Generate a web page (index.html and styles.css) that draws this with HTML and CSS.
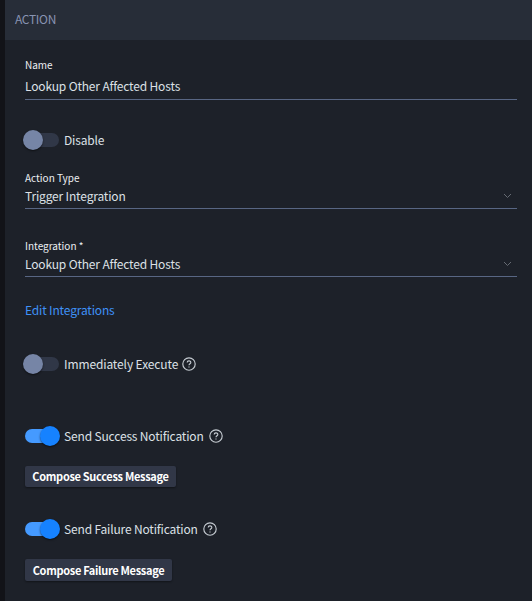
FILE: index.html
```html
<!DOCTYPE html>
<html lang="en">
<head>
<meta charset="utf-8">
<title>Action</title>
<link rel="stylesheet" href="styles.css">
</head>
<body>
<main class="panel">
  <header class="panel-header">ACTION</header>
  <form class="panel-body">
    <div class="field field-name">
      <label class="field-label">Name</label>
      <div class="field-value"><span>Lookup Other Affected Hosts</span></div>
    </div>
    <div class="toggle-row row-disable">
      <span class="switch"><span class="knob"></span></span>
      <span class="toggle-label">Disable</span>
    </div>
    <div class="field">
      <label class="field-label">Action Type</label>
      <div class="field-value"><span>Trigger Integration</span>
        <svg class="chevron" viewBox="0 0 9 6"><path d="M1 1l3.5 3.5L8 1"/></svg>
      </div>
    </div>
    <div class="field field-integration">
      <label class="field-label">Integration *</label>
      <div class="field-value"><span>Lookup Other Affected Hosts</span>
        <svg class="chevron" viewBox="0 0 9 6"><path d="M1 1l3.5 3.5L8 1"/></svg>
      </div>
    </div>
    <a class="link">Edit Integrations</a>
    <div class="toggle-row row-execute">
      <span class="switch"><span class="knob"></span></span>
      <span class="toggle-label">Immediately Execute</span>
      <svg class="help" viewBox="0 0 14 14"><circle cx="7" cy="7" r="6.2"/><path d="M5.2 5.6C5.2 3.3 8.8 3.3 8.8 5.4C8.8 6.8 7 6.8 7 8.3M7 9.5v1.1"/></svg>
    </div>
    <div class="toggle-row row-success">
      <span class="switch on"><span class="knob"></span></span>
      <span class="toggle-label">Send Success Notification</span>
      <svg class="help" viewBox="0 0 14 14"><circle cx="7" cy="7" r="6.2"/><path d="M5.2 5.6C5.2 3.3 8.8 3.3 8.8 5.4C8.8 6.8 7 6.8 7 8.3M7 9.5v1.1"/></svg>
    </div>
    <button type="button" class="button button-success">Compose Success Message</button>
    <div class="toggle-row row-failure">
      <span class="switch on"><span class="knob"></span></span>
      <span class="toggle-label">Send Failure Notification</span>
      <svg class="help" viewBox="0 0 14 14"><circle cx="7" cy="7" r="6.2"/><path d="M5.2 5.6C5.2 3.3 8.8 3.3 8.8 5.4C8.8 6.8 7 6.8 7 8.3M7 9.5v1.1"/></svg>
    </div>
    <button type="button" class="button button-failure">Compose Failure Message</button>
  </form>
</main>
</body>
</html>
```
FILE: styles.css
```css
* { box-sizing: border-box; }
body {
  margin: 0;
  height: 601px;
  overflow: hidden;
  background: #1d2129;
  color: #dce0e6;
  font: 12px/20px "Noto Sans CJK SC", "Noto Sans", sans-serif;
  letter-spacing: -0.16px;
}
.panel {
  height: 601px;
  border-left: 5px solid #121318;
}
.panel-header {
  height: 40px;
  padding-left: 10px;
  background: #272d38;
  color: #8793b2;
  line-height: 38px;
  letter-spacing: -0.3px;
}
.panel-body {
  display: flex;
  flex-direction: column;
  align-items: flex-start;
  padding: 18px 15px 0 20px;
}
.field {
  width: 100%;
  height: 41px;
  border-bottom: 1px solid #586683;
}
.field-name { height: 42px; }
.field-label {
  display: block;
  height: 17px;
  font-size: 10px;
  line-height: 20px;
  letter-spacing: 0;
  color: #eceff3;
}
.field-name .field-label { line-height: 14px; }
.field-value {
  display: flex;
  justify-content: space-between;
  height: 22px;
  line-height: 22px;
  padding-right: 5px;
}
.field-name .field-value { line-height: 21px; }
.chevron {
  width: 9px;
  height: 6px;
  margin-top: 8px;
  fill: none;
  stroke: #666b73;
  stroke-width: 1;
}
.field-integration { margin-top: 27px; }
.toggle-row {
  display: flex;
  align-items: center;
  height: 20px;
}
.row-disable { margin: 30px 0 18px; }
.switch {
  display: flex;
  align-items: center;
  width: 34px;
  height: 14px;
  border-radius: 7px;
  background: #303747;
}
.knob {
  flex: none;
  width: 20px;
  height: 20px;
  margin-left: -2px;
  border-radius: 50%;
  background: #7685a6;
  box-shadow: 0 1px 2px rgba(0, 0, 0, .55);
}
.switch.on { background: #459aff; }
.on .knob { margin-left: 15px; background: #1682ff; }
.toggle-label { margin-left: 5px; }
.row-execute .toggle-label { letter-spacing: -0.12px; }
.help {
  width: 14px;
  height: 14px;
  margin-left: 5px;
  fill: none;
  stroke: #c5cbd1;
  stroke-width: 1.15;
}
.row-execute .help { margin-left: 4px; }
.link {
  margin-top: 23px;
  color: #3f91f7;
  line-height: 19px;
}
.row-execute { margin-top: 35px; }
.row-success { margin-top: 52px; }
.button {
  height: 21px;
  padding: 0;
  margin: 20px 0 0;
  border: 0;
  border-radius: 2px;
  background: #313747;
  color: #fff;
  font: bold 11px/21px "Noto Sans CJK SC", "Noto Sans", sans-serif;
  letter-spacing: -0.31px;
  box-shadow: 0 1px 2px rgba(0, 0, 0, .4);
}
.button-success { width: 151px; }
.button-failure { width: 147px; height: 22px; }
.row-failure { margin-top: 32px; }
```
